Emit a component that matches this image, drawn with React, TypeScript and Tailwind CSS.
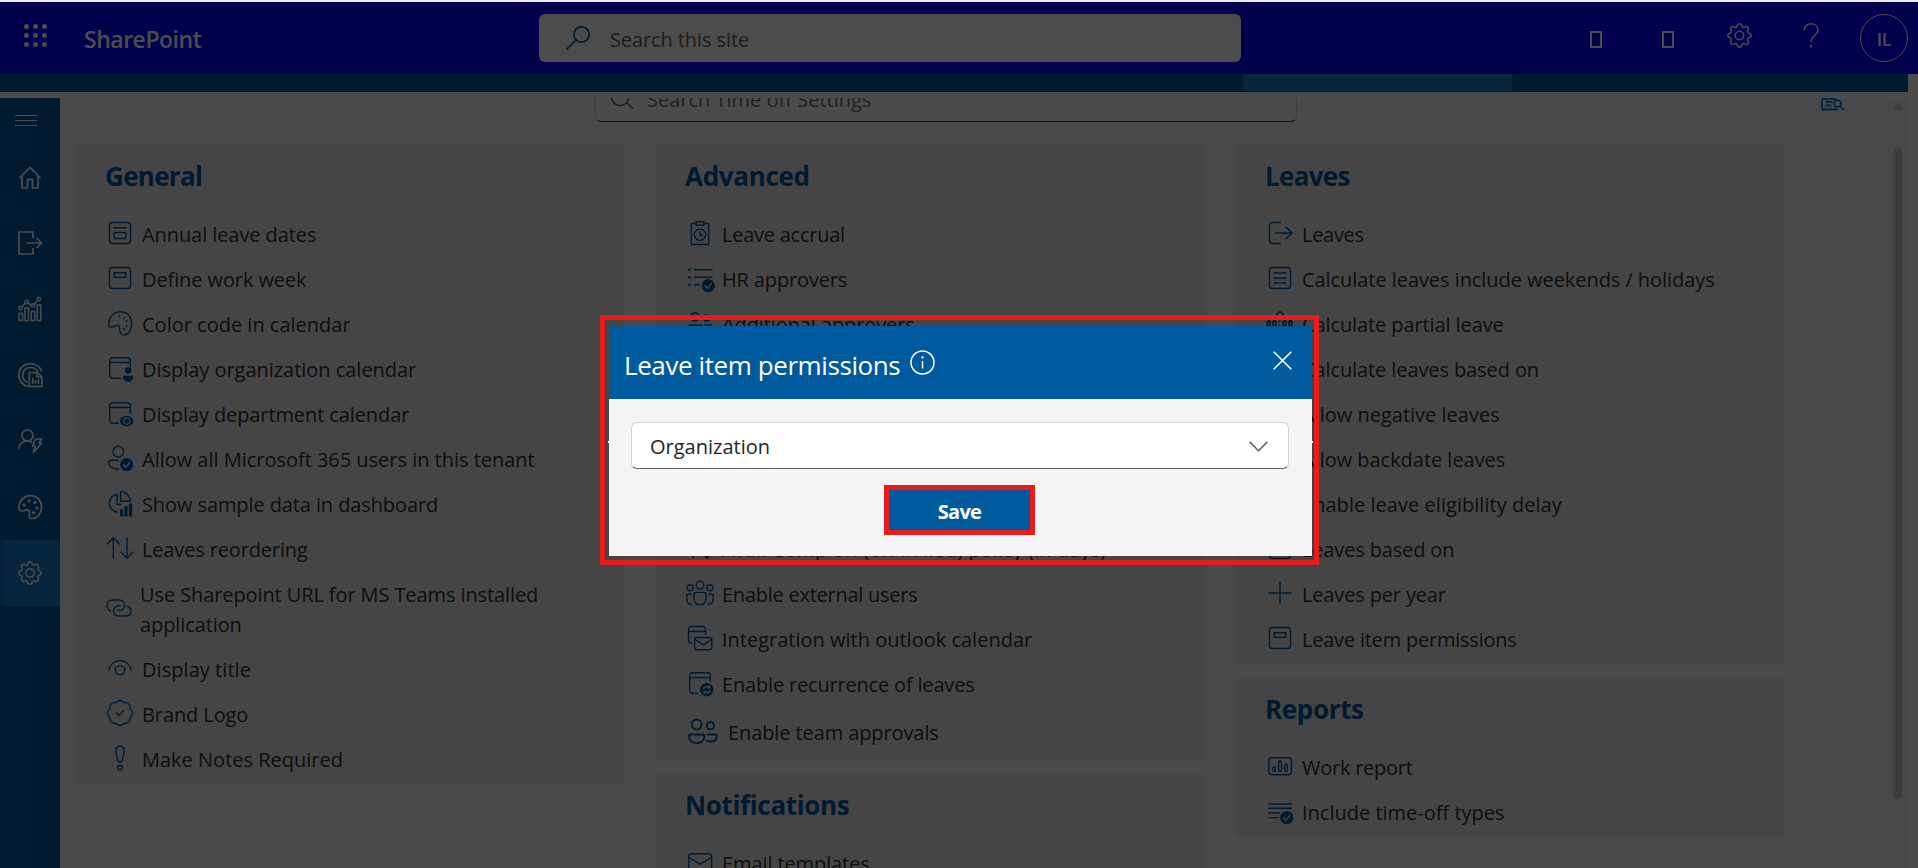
import React from "react";
import { BadgeCheck } from "lucide-react";
import { BsGear } from "react-icons/bs";

type IconProps = { children: React.ReactNode; wide?: boolean; sw?: number };

function Ic({ children, wide, sw = 1.4 }: IconProps) {
  return (
    <svg
      width={wide ? 30 : 24}
      height={wide ? 26 : 24}
      viewBox={wide ? "0 0 30 26" : "0 0 24 24"}
      fill="none"
      stroke="currentColor"
      strokeWidth={sw}
      strokeLinecap="round"
      strokeLinejoin="round"
      overflow="visible"
      className="shrink-0"
    >
      {children}
    </svg>
  );
}

const Check = ({ cx = 18.7, cy = 18.7 }: { cx?: number; cy?: number }) => (
  <g>
    <circle cx={cx} cy={cy} r="6.6" fill="currentColor" stroke="none" />
    <path d={`M${cx - 3} ${cy + 0.4}l2.1 2.1 4-4.6`} stroke="#e6e6e6" strokeWidth="1.4" />
  </g>
);

const calendarFrame = (
  <g>
    <path d="M12.5 22.3H4.7a3 3 0 0 1-3-3V4.7a3 3 0 0 1 3-3h14.6a3 3 0 0 1 3 3V11" />
    <path d="M1.7 6.5h20.6" />
  </g>
);

const icons = {
  annual: (
    <Ic>
      <rect x="1.5" y="1.5" width="21" height="21" rx="3" />
      <path d="M6 6.8h12" />
      <rect x="6.3" y="11.5" width="11.4" height="6" strokeLinejoin="miter" />
    </Ic>
  ),
  week: (
    <Ic>
      <rect x="1.5" y="1.5" width="21" height="21" rx="3" />
      <rect x="6.3" y="6.8" width="11.4" height="4.6" strokeLinejoin="miter" />
    </Ic>
  ),
  palette: (
    <Ic>
      <path d="M.6 13C1.2 5.500 6 .7 12.500 .7 19.500 .7 23.700 6 23.700 12.500c0 6-3 11.200-7.400 11.200-4.800 0-4.600-3.700-4.700-6.500-.1-3-2.400-3.600-4.800-2.300C4 16.500.4 16.800.6 13Z" />
      <g fill="currentColor" stroke="none">
        <circle cx="11.300" cy="5.300" r="1" />
        <circle cx="16" cy="6.700" r="1" />
        <circle cx="18.700" cy="10.300" r="1" />
        <circle cx="18.700" cy="14.700" r="1" />
        <circle cx="15.700" cy="18" r="1" />
      </g>
    </Ic>
  ),
  orgCalendar: (
    <Ic>
      {calendarFrame}
      <g fill="currentColor" stroke="none">
        <circle cx="20.200" cy="14.600" r="3.300" />
        <path d="M16.800 19.700h6.800c1 0 1.700.7 1.700 1.700 0 2.600-2.200 4.300-5.100 4.300S15 24 15 21.400c0-1 .8-1.700 1.800-1.700Z" />
      </g>
    </Ic>
  ),
  deptCalendar: (
    <Ic>
      <path d="M10.500 22.300H4.700a3 3 0 0 1-3-3V4.700a3 3 0 0 1 3-3h14.600a3 3 0 0 1 3 3V12" />
      <path d="M1.700 6.500h20.600" />
      <ellipse cx="18.700" cy="20" rx="6.700" ry="5.300" fill="currentColor" stroke="none" />
      <circle cx="18.700" cy="20" r="3.100" stroke="#e6e6e6" strokeWidth="1.200" />
    </Ic>
  ),
  userCheck: (
    <Ic>
      <circle cx="10.300" cy="5.700" r="5.400" />
      <path d="M10.500 14.300H3c-1.400 0-2.300.9-2.300 2.300 0 4 4 6.500 9.800 6.600" />
      <Check />
    </Ic>
  ),
  pie: (
    <Ic>
      <path d="M12.600.6v9.700h9.700C22.300 5 18 .6 12.600.6Z" strokeLinejoin="miter" />
      <path d="M9 3.200C4.500 4 1.400 7.600 1.400 12c0 5 3.500 8.500 8.200 9.100M9 3.200V13.500h4" />
      <g fill="currentColor" stroke="none">
        <rect x="12" y="18" width="3.200" height="7.400" rx=".8" />
        <rect x="16.400" y="15" width="3.200" height="10.400" rx=".8" />
        <rect x="20.900" y="12.500" width="3.200" height="12.900" rx=".8" />
      </g>
    </Ic>
  ),
  reorder: (
    <Ic>
      <path d="M5.300 22.200V1.800M-.8 8l6.100-6.200L11.400 8M19 1.800v20.400M13 16l6 6.200 6-6.200" />
    </Ic>
  ),
  link: (
    <Ic>
      <path d="M3.500 15C1.500 14 0 12.300 0 9.500 0 6.300 2.400 4 5.500 4H12c3.200 0 5.500 2.200 5.500 5.200 0 3-2.200 5-5.300 5H11" />
      <path d="M20.500 10c2 1 3.500 2.700 3.500 5.500 0 3.200-2.400 4.500-5.500 4.500H12c-3.200 0-5.500-1.700-5.500-4.700 0-3 2.200-5.500 5.300-5.500H13" />
    </Ic>
  ),
  eye: (
    <Ic>
      <path d="M.7 14C2 8.300 6.500 4.800 12 4.800S22 8.300 23.300 14" />
      <circle cx="12" cy="14.300" r="4.700" />
    </Ic>
  ),
  badge: <BadgeCheck size={30} strokeWidth={1.1} className="-mx-[3px] shrink-0" />,
  exclaim: (
    <Ic>
      <path d="M12 .3c2.600 0 4 1.700 4 4.200 0 3.200-1 7.200-1.800 9.700-.4 1.400-1.200 1.900-2.200 1.900s-1.800-.5-2.200-1.900C9 11.700 8 7.700 8 4.500 8 2 9.400.3 12 .3Z" />
      <circle cx="12" cy="21.500" r="2.300" />
    </Ic>
  ),
  clipboard: (
    <Ic>
      <path d="M8 2.500H4.300c-.6 0-1 .4-1 1v19c0 .6.400 1 1 1h15.400c.6 0 1-.4 1-1v-19c0-.6-.4-1-1-1H16" />
      <rect x="8" y=".7" width="8" height="3.600" rx=".6" />
      <circle cx="12" cy="13.700" r="5.700" />
      <path d="M12 11v3h2.500" />
    </Ic>
  ),
  listCheck: (
    <Ic>
      <path d="M6.500 3.700H24M6.500 11.300H24M6.500 18.700h5" />
      <g fill="currentColor" stroke="none">
        <circle cx="1.400" cy="3.700" r="1.300" />
        <circle cx="1.400" cy="11.300" r="1.300" />
        <circle cx="1.400" cy="18.700" r="1.300" />
      </g>
      <Check cx={20.3} cy={19.7} />
    </Ic>
  ),
  people: (
    <Ic sw={1.7}>
      <circle cx="7" cy="6" r="4" />
      <circle cx="18.500" cy="7" r="3" />
      <path d="M2.500 14h10c.8 0 1.300.5 1.300 1.300 0 3.200-2.400 5.200-6.300 5.200s-6.300-2-6.300-5.200c0-.8.500-1.300 1.300-1.300ZM17 14h5.500c.8 0 1.300.5 1.300 1.300 0 2.700-2 4.200-5.300 4.200" />
    </Ic>
  ),
  peopleBold: (
    <Ic wide sw={2}>
      <circle cx="8.700" cy="6.500" r="4.900" />
      <circle cx="22.400" cy="7.700" r="3.600" />
      <path d="M3 16.500h11.500c1.200 0 1.900.7 1.900 1.800 0 4-3 6.700-7.700 6.700S1 22.300 1 18.300c0-1.100.8-1.800 2-1.800ZM19.500 16.500h7.300c1.300 0 2 .7 2 1.800 0 3.300-2.400 5.200-6.300 5.200-1.300 0-2.400-.2-3.300-.6" />
    </Ic>
  ),
  group: (
    <Ic>
      <circle cx="12" cy="4.200" r="3.900" />
      <circle cx="2.200" cy="6.700" r="3" />
      <circle cx="21.800" cy="6.700" r="3" />
      <path d="M8 11.400h8c1.200 0 2 .8 2 2v4.200c0 3.700-2.400 6.100-6 6.100s-6-2.400-6-6.100v-4.200c0-1.200.8-2 2-2ZM2.800 13H.8c-1.200 0-2 .8-2 2v3c0 3.200 1.900 5.400 5.200 5.600M21.200 13h2c1.200 0 2 .8 2 2v3c0 3.200-1.900 5.400-5.200 5.600" />
    </Ic>
  ),
  mailCalendar: (
    <Ic>
      <path d="M3.800 17.400C1.600 17.200.5 16 .5 13.800V3.500a3 3 0 0 1 3-3h11a3 3 0 0 1 3 3v5M.5 5.500h17" />
      <rect x="6.600" y="11.500" width="17.200" height="12.200" rx="2" />
      <path d="m7 13.500 8.200 5.300 8.200-5.300" />
    </Ic>
  ),
  recurrence: (
    <Ic>
      <path d="M10 22.300H4.700a3 3 0 0 1-3-3V4.700a3 3 0 0 1 3-3h14.600a3 3 0 0 1 3 3V10" />
      <path d="M1.700 6.500h20.600" />
      <circle cx="18.700" cy="18.700" r="6.700" fill="currentColor" stroke="none" />
      <path d="M15.500 17.700c.5-1.500 1.700-2.400 3.200-2.400 1.200 0 2.100.5 2.800 1.400m0-2v2.200h-2.200M21.900 19.700c-.5 1.500-1.700 2.400-3.200 2.400-1.200 0-2.100-.5-2.800-1.400m0 2v-2.200h2.200" stroke="#e6e6e6" strokeWidth="1.200" />
    </Ic>
  ),
  mail: (
    <Ic>
      <rect x=".7" y="3.700" width="22.900" height="17.500" rx="3" />
      <path d="m.9 7.500 11.200 6.700L23.400 7.500" />
    </Ic>
  ),
  exit: (
    <Ic>
      <path d="M12.500 22.500h-8a3 3 0 0 1-3-3v-15a3 3 0 0 1 3-3h8M7.500 12H24M18 6.300l6 5.700-6 5.700" />
    </Ic>
  ),
  doc: (
    <Ic>
      <rect x="1.500" y="1.500" width="21" height="21" rx="3" />
      <path d="M6 7h12M6 12h12M6 17h12" />
    </Ic>
  ),
  partial: (
    <Ic>
      <path d="m7.500 4.500 4.500-4 4.500 4" strokeWidth="1.600" />
      <g strokeWidth="1.800">
        <rect x="-.8" y="10" width="3" height="5" rx="1.300" />
        <rect x="5" y="10" width="3" height="5" rx="1.300" />
        <rect x="15" y="10" width="3" height="5" rx="1.300" />
        <rect x="21" y="10" width="3" height="5" rx="1.300" />
      </g>
      <circle cx="11.500" cy="10.500" r="1.100" fill="currentColor" stroke="none" />
      <circle cx="11.500" cy="14.500" r="1.100" fill="currentColor" stroke="none" />
    </Ic>
  ),
  plus: (
    <Ic>
      <path d="M12 1v22M1 12h22" />
    </Ic>
  ),
  report: (
    <Ic>
      <rect x=".8" y="3.800" width="22.600" height="17" rx="3" />
      <rect x="4.800" y="13" width="2.600" height="4.500" rx="1.200" />
      <rect x="10.600" y="7" width="2.900" height="10.500" rx="1.300" />
      <rect x="16.700" y="10" width="2.600" height="7.500" rx="1.200" />
    </Ic>
  ),
  linesCheck: (
    <Ic>
      <path d="M.8 5h22.800M.8 9.300h22.800M.8 14h11M.8 18.600h9" />
      <Check />
    </Ic>
  ),
};

type Row = { icon: keyof typeof icons; text: string; kind?: "two" | "team"; track?: string };

function Card({ title, rows, track }: { title: string; rows: Row[]; track?: string }) {
  return (
    <section className="w-[550px] bg-[#e6e6e6] px-[30px] pb-px">
      <h3
        className={`border-b border-[#dadada] pt-[11px] pb-[6px] text-[26px] leading-[40px] font-bold text-[#005a9e] ${track ?? "tracking-[-0.35px]"}`}
      >
        {title}
      </h3>
      <ul className="pt-[9px]">
        {rows.map((r) => (
          <li
            key={r.text}
            className={
              r.kind === "two"
                ? "flex h-[75px] items-center gap-[9px] pl-[2px]"
                : r.kind === "team"
                  ? "flex h-[51px] items-center gap-[10px] pl-[3px]"
                  : "flex h-[45px] items-center gap-[10px] pl-[3px]"
            }
          >
            <span className="mb-[3px] text-[#005a9e]">{icons[r.icon]}</span>
            <span
              className={`text-[20px] leading-[30px] text-[#323130] ${r.kind === "two" ? "w-[430px]" : "whitespace-nowrap"} ${r.track ?? "tracking-[-0.1px]"}`}
            >
              {r.text}
            </span>
          </li>
        ))}
      </ul>
    </section>
  );
}

const general: Row[] = [
  { icon: "annual", text: "Annual leave dates", track: "tracking-[-0.08px]" },
  { icon: "week", text: "Define work week" },
  { icon: "palette", text: "Color code in calendar", track: "tracking-[0px]" },
  { icon: "orgCalendar", text: "Display organization calendar", track: "tracking-[-0.03px]" },
  { icon: "deptCalendar", text: "Display department calendar" },
  { icon: "userCheck", text: "Allow all Microsoft 365 users in this tenant", track: "tracking-[-0.02px]" },
  { icon: "pie", text: "Show sample data in dashboard" },
  { icon: "reorder", text: "Leaves reordering", track: "tracking-[-0.15px]" },
  { icon: "link", text: "Use Sharepoint URL for MS Teams installed application", kind: "two" },
  { icon: "eye", text: "Display title", track: "tracking-[0.05px]" },
  { icon: "badge", text: "Brand Logo" },
  { icon: "exclaim", text: "Make Notes Required", track: "tracking-[0px]" },
];

const advanced: Row[] = [
  { icon: "clipboard", text: "Leave accrual", track: "tracking-[-0.25px]" },
  { icon: "listCheck", text: "HR approvers", track: "tracking-[-0.15px]" },
  { icon: "people", text: "Additional approvers" },
  { icon: "doc", text: "Approval levels" },
  { icon: "doc", text: "Approval workflow" },
  { icon: "doc", text: "Leave balance" },
  { icon: "doc", text: "Carry forward" },
  { icon: "reorder", text: "Avail Comp off (off in lieu) policy (in days)", track: "tracking-[0.08px]" },
  { icon: "group", text: "Enable external users", track: "tracking-[-0.25px]" },
  { icon: "mailCalendar", text: "Integration with outlook calendar", track: "tracking-[0px]" },
  { icon: "recurrence", text: "Enable recurrence of leaves", track: "tracking-[-0.18px]" },
  { icon: "peopleBold", text: "Enable team approvals", kind: "team" },
];

const leaves: Row[] = [
  { icon: "exit", text: "Leaves", track: "tracking-[-0.3px]" },
  { icon: "doc", text: "Calculate leaves include weekends / holidays", track: "tracking-[-0.06px]" },
  { icon: "partial", text: "Calculate partial leave" },
  { icon: "doc", text: "Calculate leaves based on" },
  { icon: "doc", text: "Allow negative leaves", track: "tracking-[0px]" },
  { icon: "doc", text: "Allow backdate leaves", track: "tracking-[-0.03px]" },
  { icon: "doc", text: "Enable leave eligibility delay", track: "tracking-[0.04px]" },
  { icon: "doc", text: "Leaves based on", track: "tracking-[-0.15px]" },
  { icon: "plus", text: "Leaves per year", track: "tracking-[-0.15px]" },
  { icon: "week", text: "Leave item permissions", track: "tracking-[-0.22px]" },
];

const sideIcons: React.ReactNode[] = [
  <Ic sw={1.7} key="home">
    <path d="M1.500 13 12 2.500 22.500 13M4 11v12h5.500v-8.500h5V23H20V11" strokeLinecap="butt" strokeLinejoin="miter" />
  </Ic>,
  <Ic sw={1.7} key="exit">
    <path d="M15 7V1H1v22h14v-6M8.500 12H23M18.500 7l5 5-5 5" strokeLinecap="butt" strokeLinejoin="miter" />
  </Ic>,
  <Ic sw={1.5} key="chart">
    <path d="M1 16.500h3.500V23.500H1zM7 11h3.500v12.500H7zM13.300 14.500h3.500v9h-3.500zM19.300 8h3.500v15.500h-3.500z" strokeLinejoin="miter" />
    <path d="m4 10 3.500-4M10 6l3.500 2M16.300 7.500 19.500 3.500" />
    <circle cx="2.500" cy="11" r="1.700" />
    <circle cx="8.700" cy="5" r="1.700" />
    <circle cx="15" cy="8.500" r="1.700" />
    <circle cx="21" cy="2" r="1.700" />
  </Ic>,
  <Ic sw={1.7} key="insights">
    <path d="M23.500 8C22 3.500 17.500.7 12.500.7 6 .7.8 5.600.8 12c0 5.500 3.500 10 8.700 11.300M19.500 8C18 5.800 15.500 4.500 12.500 4.500 8 4.500 4.600 7.800 4.600 12c0 3 1.700 5.800 4.200 7.100" />
    <path d="M11.300 9.500h8.200l4.300 4.300v9.700H11.300zM19 9.800V14h4.500M14.700 15.500V20M17.500 18v2M20.500 17v3" strokeLinejoin="miter" />
  </Ic>,
  <Ic sw={1.7} key="user">
    <circle cx="9.500" cy="6.500" r="5.500" />
    <path d="M.8 19.500C.8 15 4.500 12 9.500 12c1.700 0 3 .3 4 .9" />
    <path d="M17.500 10h6l-2.300 4.300h2.500L15.500 23.500l1.700-6.500h-2.700z" />
  </Ic>,
  <Ic sw={1.7} key="palette">
    <path d="M.8 12C1.400 5.500 6 .7 12.500.7 19 .7 23.500 5.500 23.500 12c0 6.500-4 11.500-9.500 11.500-2.500 0-3-1.500-2.700-3.500.2-1.700.7-3-.3-4.300-1.200-1.500-2.600-1-4.500-.2C3.500 16.800.5 15.500.8 12Z" />
    <g fill="currentColor" stroke="none">
      <circle cx="6" cy="10" r="1.600" />
      <circle cx="11" cy="6" r="1.600" />
      <circle cx="17" cy="7.500" r="1.600" />
      <circle cx="19" cy="13" r="1.600" />
      <circle cx="15.500" cy="17.500" r="1.600" />
    </g>
  </Ic>,
  <BsGear size={24} key="gear" />,
];

function TopBar() {
  return (
    <header className="flex h-[72px] shrink-0 items-center bg-[#0000ff] text-white">
      <div className="mb-[5px] ml-[24px] grid grid-cols-3 gap-x-[4px] gap-y-[4px]">
        {Array.from({ length: 9 }, (_, i) => (
          <span key={i} className="size-[5px] rounded-full bg-white" />
        ))}
      </div>
      <div className="ml-[37px] w-[455px] pt-[2px] text-[23px] leading-[30px] font-semibold tracking-[-0.48px]">SharePoint</div>
      <div className="flex h-[48px] w-[702px] items-center rounded-[6px] bg-white pl-[27px]">
        <svg width="24" height="24" viewBox="0 0 24 24" fill="none" stroke="#005a9e" strokeWidth="1.7" strokeLinecap="round">
          <circle cx="15.500" cy="8.500" r="7.700" />
          <path d="M10 14 .8 23.200" />
        </svg>
        <span className="ml-[20px] pt-[3px] text-[20px] tracking-[-0.1px] text-[#605e5c]">Search this site</span>
      </div>
      <div className="mt-[2px] ml-[349px] h-[17px] w-[12px] border-2 border-white" />
      <div className="mt-[2px] ml-[60px] h-[17px] w-[12px] border-2 border-white" />
      <BsGear size={25} className="mb-[5px] ml-[53px]" />
      <svg className="mb-[5px] ml-[51px]" width="16" height="25" viewBox="0 0 16 25" fill="none" stroke="white" strokeWidth="1.500">
        <path d="M1 7.500C1 3.500 4 .8 8 .8s7 2.500 7 6.200c0 5.500-7 5.700-7 12" />
        <path d="M8 22v2.500" strokeWidth="2" />
      </svg>
      <div className="ml-[41px] flex size-[48px] items-center justify-center rounded-full border border-white text-[18px] font-semibold tracking-[-0.3px]">
        <span className="pt-[2px]">IL</span>
      </div>
    </header>
  );
}

function PermissionsDialog() {
  return (
    <div role="dialog" className="absolute top-[315px] left-[600px] h-[250px] w-[719px] border-[5px] border-[#e81c1c] pt-[6px] pl-[4px]">
      <div className="absolute top-[121px] left-[3px] h-[2px] w-[705px] bg-white" />
      <div className="relative flex h-[230px] w-[703px] flex-col bg-[#f4f4f4]">
        <div className="flex h-[73px] items-center bg-[#005a9e] pr-[20px] pl-[15px] text-white">
          <span className="w-[276px] pt-[4px] text-[26px] leading-[36px] tracking-[-0.41px] whitespace-nowrap">
            Leave item permissions
          </span>
          <svg className="ml-[10px]" width="25" height="25" viewBox="0 0 25 25" fill="none" stroke="white" strokeWidth="1.500">
            <circle cx="12.500" cy="12.500" r="11.500" />
            <path d="M12.500 11v7.500" />
            <path d="M12.500 6.300v2.200" strokeWidth="2" />
          </svg>
          <svg className="mb-[5px] ml-auto" width="19" height="19" viewBox="0 0 19 19" fill="none" stroke="white" strokeWidth="1.600">
            <path d="m.7.7 17.600 17.600M18.300.7.7 18.300" />
          </svg>
        </div>
        <div className="flex flex-col pt-[23px] pl-[22px]">
          <div className="flex h-[47px] w-[658px] items-center justify-between rounded-[6px] border border-[#d1d1d1] border-b-[#616161] bg-white pr-[20px] pl-[18px]">
            <span className="pt-[3px] text-[20px] tracking-[0px] text-[#242424]">Organization</span>
            <svg className="mt-px" width="19" height="11" viewBox="0 0 19 11" fill="none" stroke="#616161" strokeWidth="1.500">
              <path d="m.7.9 8.800 8.800L18.300.9" />
            </svg>
          </div>
          <button className="mt-[16px] ml-[253px] h-[50px] w-[151px] border-[5px] border-[#e81c1c] bg-[#005a9e] pt-[3px] text-[20px] leading-[30px] font-bold tracking-[-0.7px] text-white">
            Save
          </button>
        </div>
      </div>
    </div>
  );
}

export default function App() {
  return (
    <div className="relative flex h-[868px] w-[1918px] flex-col overflow-hidden bg-[#fafafa] pt-[2px] font-['Open_Sans','Noto_Sans',sans-serif]">
      <div className="absolute inset-x-0 top-0 h-[2px] bg-[#ece8f4]" />
      <TopBar />
      <div className="flex h-[18px] w-[1908px] shrink-0 bg-[#005a9e]">
        <div className="ml-[1243px] h-[17px] w-[269px] bg-[#1a80d0]" />
      </div>
      <div className="mt-[6px] flex min-h-0 flex-1">
        <nav className="flex w-[60px] shrink-0 flex-col bg-[#005a9e] text-white">
          <div className="flex h-[46px] flex-col gap-[4px] pt-[17px] pl-[15px]">
            <span className="h-px w-[22px] bg-white" />
            <span className="h-px w-[22px] bg-white" />
            <span className="h-px w-[22px] bg-white" />
          </div>
          {sideIcons.map((icon, i) => (
            <div
              key={i}
              className={
                i === 6
                  ? "flex h-[66px] items-center border-l-4 border-[#106ebe] bg-[#1a80d0] pl-[14px]"
                  : "flex h-[66px] items-center pl-[18px]"
              }
            >
              {icon}
            </div>
          ))}
        </nav>
        <main className="flex w-[1848px] flex-col overflow-hidden bg-[#f3f3f3]">
          <div className="flex h-[47px] shrink-0 items-start">
            <div className="ml-[535px] flex h-[24px] w-[702px] items-end rounded-b-[6px] border border-t-0 border-[#d1d1d1] border-b-[#424242] bg-[#fafafa] pl-[14px]">
              <svg className="mb-[12px]" width="24" height="11" viewBox="0 0 24 11" fill="none" stroke="#616161" strokeWidth="1.600">
                <path d="M1.500 0c.8 4.300 4.300 7.500 8.700 7.500S18 4.500 18.800 0M16.500 4.500 23 10.800" />
              </svg>
              <span className="mb-[6px] ml-[13px] text-[20px] leading-[30px] tracking-[0px] text-[#707070]">
                Search Time off Settings
              </span>
            </div>
            <svg className="ml-[524px]" width="24" height="13" viewBox="0 0 24 13" fill="none" stroke="#0078d4" strokeWidth="1.800">
              <path d="M1 0v11.500h16M1 .9h14M4.500 4h7M4.500 7.500h6" />
              <circle cx="16.500" cy="5.500" r="3.400" />
              <path d="m19 8 4 4.200" />
            </svg>
          </div>
          <div className="flex items-start gap-[30px] pl-[15px]">
            <Card title="General" rows={general} track="tracking-[-0.7px]" />
            <div className="flex flex-col gap-[15px]">
              <Card title="Advanced" rows={advanced} track="tracking-[-0.3px]" />
              <Card title="Notifications" rows={[{ icon: "mail", text: "Email templates" }]} />
            </div>
            <div className="flex flex-col gap-[15px]">
              <Card title="Leaves" rows={leaves} track="tracking-[-0.7px]" />
              <Card
                title="Reports"
                rows={[
                  { icon: "report", text: "Work report", track: "tracking-[-0.25px]" },
                  { icon: "linesCheck", text: "Include time-off types", track: "tracking-[0px]" },
                ]}
              />
            </div>
          </div>
        </main>
      </div>
      <div className="absolute top-[98px] left-[1888px] flex h-[770px] w-[20px] flex-col items-center bg-[#f5f2f3] pr-px">
        <svg className="mt-[5px]" width="10" height="7" viewBox="0 0 10 7" fill="#c8c8c8">
          <path d="M4 .6q1-1 2 0L9.700 5.500Q10 7 9 7H1Q0 7 .3 5.500Z" />
        </svg>
        <div className="mt-[38px] h-[651px] w-[9px] rounded-full bg-[#c8c8c8]" />
      </div>
      <div className="absolute inset-x-0 top-[2px] bottom-0 bg-black/70" />
      <PermissionsDialog />
    </div>
  );
}
